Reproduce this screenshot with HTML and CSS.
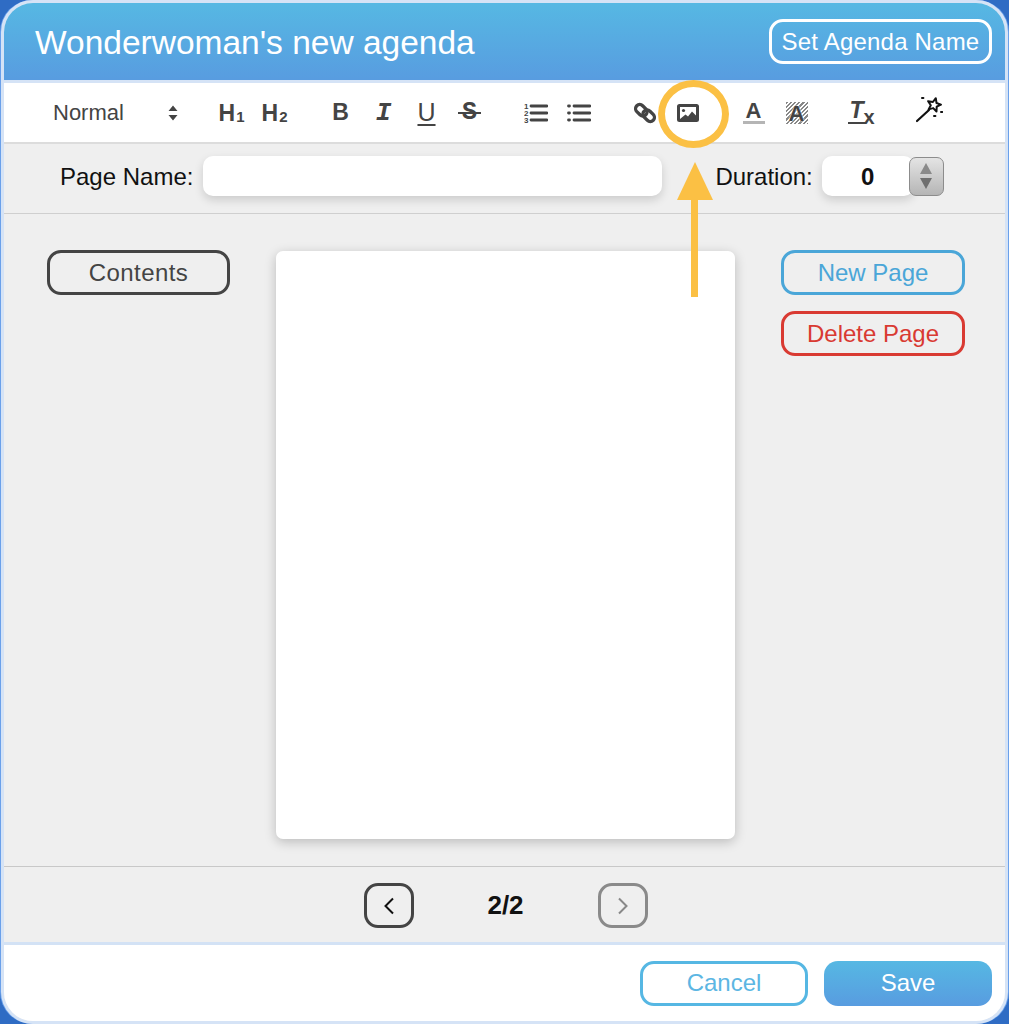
FILE: index.html
```html
<!DOCTYPE html>
<html>
<head>
    <title>Agenda editor</title>
    <link rel="stylesheet" href="styles.css">
</head>
<body>
    <div class="window">
        <div class="header">
            <div class="title">Wonderwoman's new agenda</div>
            <button class="btn btn-white">Set Agenda Name</button>
        </div>

        <div class="toolbar">
            <div class="picker">
                <span>Normal</span>
                <svg width="10" height="16" viewBox="0 0 10 16"><path d="M5 0.5 L9.5 6 H0.5 Z M5 15.5 L9.5 10 H0.5 Z" fill="#444"/></svg>
            </div>
            <div class="tool-group">
                <span class="tool tool-h">H<small>1</small></span>
                <span class="tool tool-h">H<small>2</small></span>
            </div>
            <div class="tool-group">
                <span class="tool tool-b">B</span>
                <span class="tool tool-i">I</span>
                <span class="tool tool-u">U</span>
                <span class="tool tool-s">S</span>
            </div>
            <div class="tool-group">
                <span class="tool">
                    <svg width="24" height="22" viewBox="0 0 24 22">
                        <text x="0" y="7" class="list-num">1</text>
                        <text x="0" y="14" class="list-num">2</text>
                        <text x="0" y="21" class="list-num">3</text>
                        <path d="M7 4 H23 M7 11 H23 M7 18 H23" stroke="#444" stroke-width="2.8" stroke-linecap="round"/>
                    </svg>
                </span>
                <span class="tool">
                    <svg width="24" height="22" viewBox="0 0 24 22">
                        <path d="M1.5 4 H2.5 M1.5 11 H2.5 M1.5 18 H2.5" stroke="#444" stroke-width="2.8" stroke-linecap="round"/>
                        <path d="M7 4 H23 M7 11 H23 M7 18 H23" stroke="#444" stroke-width="2.8" stroke-linecap="round"/>
                    </svg>
                </span>
            </div>
            <div class="tool-group">
                <span class="tool">
                    <svg width="22" height="22" viewBox="0 0 24 24" fill="none" stroke="#444" stroke-width="3.6">
                        <rect x="1" y="4.5" width="14" height="9" rx="4.5" transform="rotate(45 8 9)"/>
                        <rect x="9" y="10.5" width="14" height="9" rx="4.5" transform="rotate(45 16 15)"/>
                    </svg>
                </span>
                <span class="tool">
                    <svg width="22" height="18" viewBox="0 0 22 18">
                        <rect x="1.5" y="1.5" width="19" height="15" rx="1" fill="none" stroke="#444" stroke-width="3"/>
                        <circle cx="6.5" cy="6.5" r="1.6" fill="#444"/>
                        <path d="M3 15 L8.5 10.5 L11 12.5 L15 7.5 L19.5 12 V15 Z" fill="#444"/>
                    </svg>
                </span>
            </div>
            <div class="tool-group">
                <span class="tool"><span class="tool-color">A</span></span>
                <span class="tool"><span class="tool-bg">A</span></span>
            </div>
            <div class="tool-group">
                <span class="tool tool-clear"><span class="clear-t">T</span><span class="clear-x">x</span></span>
            </div>
            <div class="tool-group">
                <span class="tool tool-wand">
                    <svg width="28" height="28" viewBox="0 0 28 28" fill="none">
                        <path d="M2 25 L14 14" stroke="#111" stroke-width="2.2" stroke-linecap="round"/>
                        <path d="M20.8 2.2 L21.5 7 L26 8.6 L21.7 10.7 L21.5 15.5 L18.2 12.1 L13.6 13.4 L15.8 9.2 L13.1 5.2 L17.9 6 Z" fill="white" stroke="#111" stroke-width="2" stroke-linejoin="round"/>
                        <path d="M7 2 h1.4 M21 -1 h1.4 M26 16 h1.4 M19 20 h1.4" stroke="#111" stroke-width="2" stroke-linecap="round"/>
                    </svg>
                </span>
            </div>
        </div>

        <div class="form-row">
            <label class="form-label">Page Name:</label>
            <div class="input input-name"></div>
            <label class="form-label label-duration">Duration:</label>
            <div class="duration">
                <div class="input input-duration">0</div>
                <div class="stepper">
                    <svg width="14" height="28" viewBox="0 0 14 28"><path d="M7 1 L13 12 H1 Z" fill="#8a8a8a"/><path d="M7 27 L13 16 H1 Z" fill="#6f6f6f"/></svg>
                </div>
            </div>
        </div>

        <div class="main">
            <div class="side-left">
                <button class="btn btn-dark btn-side btn-contents">Contents</button>
            </div>
            <div class="page"></div>
            <div class="side-right">
                <button class="btn btn-blue btn-side">New Page</button>
                <button class="btn btn-red btn-side">Delete Page</button>
            </div>
        </div>

        <div class="pager">
            <button class="btn btn-dark btn-nav">
                <svg width="12" height="18" viewBox="0 0 12 18"><path d="M10 1.5 L2.5 9 L10 16.5" fill="none" stroke="#111" stroke-width="2"/></svg>
            </button>
            <span class="page-count">2/2</span>
            <button class="btn btn-gray btn-nav">
                <svg width="12" height="18" viewBox="0 0 12 18"><path d="M2 1.5 L9.5 9 L2 16.5" fill="none" stroke="#888" stroke-width="2"/></svg>
            </button>
        </div>

        <div class="footer">
            <button class="btn btn-cancel">Cancel</button>
            <button class="btn btn-save">Save</button>
        </div>

        <!-- yellow callout over the image button -->
        <div class="callout-ring"></div>
        <svg class="callout-arrow" width="38" height="135" viewBox="0 0 38 135">
            <path d="M19 0 L37 38 H1 Z" fill="#fbc044"/>
            <rect x="15" y="37" width="7" height="98" fill="#fbc044"/>
        </svg>
    </div>
</body>
</html>
```

FILE: styles.css
```css
html, body { margin: 0; padding: 0; }
body { background: #2f6cc4; font-family: "Liberation Sans", Arial, sans-serif; }

.window {
    position: relative;
    width: 1007px;
    height: 1024px;
    margin-left: 1px;
    box-sizing: border-box;
    border: 3px solid #d5e3f6;
    border-radius: 32px;
    box-shadow: -1px 0 0 #6aa0ea, 1px 0 0 #6aa0ea;
    overflow: hidden;
    display: flex;
    flex-direction: column;
    background: #efefef;
}

.btn {
    box-sizing: border-box;
    height: 45px;
    border: 3px solid #444;
    border-radius: 14px;
    background: transparent;
    font-family: inherit;
    font-size: 24px;
    padding: 0;
    display: flex;
    align-items: center;
    justify-content: center;
}

/* header */
.header {
    height: 77px;
    flex: none;
    box-sizing: border-box;
    padding: 0 13px 0 31px;
    display: flex;
    align-items: center;
    justify-content: space-between;
    background: linear-gradient(#56b8e3, #589ce0);
}
.title { color: white; font-size: 33.5px; margin-top: 2px; }
.btn-white { width: 223px; border-color: white; color: white; letter-spacing: 0.2px; }

/* toolbar */
.toolbar {
    height: 59px;
    flex: none;
    margin-top: 3px;
    border-bottom: 2px solid #dcdcdc;
    background: white;
    color: #444;
    display: flex;
    align-items: center;
    padding-left: 49px;
    box-shadow: 0 -3px 0 #d5e3f6;
}
.picker {
    width: 125px;
    display: flex;
    justify-content: space-between;
    align-items: center;
    font-size: 22px;
    padding-right: 10px;
    margin-right: 22px;
}
.tool-group { display: flex; margin-right: 23px; }
.tool {
    width: 43px;
    height: 30px;
    display: flex;
    align-items: center;
    justify-content: center;
    font-size: 23px;
    font-weight: bold;
}
.tool-h { padding-top: 2px; box-sizing: border-box; }
.tool-h small { font-size: 15px; position: relative; top: 3px; margin-left: 1px; }
.tool-i { font-family: "Liberation Mono", monospace; font-style: italic; font-size: 26px; }
.tool-u {
    font-weight: normal;
    font-size: 25px;
    text-decoration: underline;
    text-decoration-thickness: 2px;
    text-underline-offset: 3px;
}
.tool-s { position: relative; font-family: "Liberation Mono", monospace; font-size: 25px; }
.tool-s::after {
    content: "";
    position: absolute;
    left: 10px;
    right: 10px;
    top: 14px;
    height: 2px;
    background: #444;
}
.list-num { font-size: 8px; font-weight: bold; fill: #444; font-family: "Liberation Sans", sans-serif; }
.tool-color {
    display: block;
    width: 22px;
    text-align: center;
    font-size: 22px;
    line-height: 20px;
    border-bottom: 3px solid #b5b5b5;
}
.tool-bg {
    display: block;
    width: 22px;
    height: 22px;
    text-align: center;
    font-size: 22px;
    line-height: 24px;
    text-shadow: 0 0 1px white, 0 0 2px white;
    background: repeating-linear-gradient(135deg, #888 0 1.5px, white 1.5px 3px);
}
.tool-clear { align-items: flex-start; }
.clear-t {
    font-style: italic;
    font-size: 23px;
    line-height: 24px;
    border-bottom: 2px solid #444;
    padding: 0 3px 0 1px;
    margin-left: -2px;
}
.clear-x { font-size: 20px; line-height: 18px; margin-top: 10px; margin-left: -3px; }
.tool-wand { margin-top: -6px; }

/* page name row */
.form-row {
    height: 70px;
    flex: none;
    box-sizing: border-box;
    border-bottom: 1px solid #cfcfcf;
    display: flex;
    align-items: center;
    padding-left: 56px;
    padding-bottom: 5px;
    font-size: 24px;
    color: #111;
}
.form-label { margin-right: 10px; margin-top: 2px; }
.input {
    height: 40px;
    background: white;
    border-radius: 10px;
    box-shadow: 0 4px 10px rgba(0,0,0,0.15);
}
.input-name { width: 459px; margin-right: 53px; }
.label-duration { margin-right: 9px; }
.duration { display: flex; align-items: center; }
.input-duration {
    width: 92px;
    margin-right: -5px;
    padding-top: 2px;
    box-sizing: border-box;
    font-weight: bold;
    display: flex;
    align-items: center;
    justify-content: center;
}
.stepper {
    position: relative;
    box-sizing: border-box;
    width: 35px;
    height: 39px;
    border: 1px solid #8c8c8c;
    border-radius: 7px;
    background: linear-gradient(#e4e4e4, #b5b5b5);
    display: flex;
    align-items: center;
    justify-content: center;
}

/* page area */
.main {
    flex: 1;
    display: flex;
    border-bottom: 1px solid #c8c8c8;
    padding-top: 36px;
}
.side-left { padding-left: 43px; width: 183px; margin-right: 46px; }
.btn-side { width: 184px; }
.btn-contents { width: 183px; letter-spacing: 0.4px; }
.page {
    width: 459px;
    height: 588px;
    margin-top: 1px;
    background: white;
    border-radius: 7px;
    box-shadow: 0 3px 12px rgba(0,0,0,0.22);
    margin-right: 46px;
}
.side-right { display: flex; flex-direction: column; gap: 16px; }
.btn-dark { color: #444; }
.btn-blue { border-color: #4aa6d8; color: #4aa6d8; }
.btn-red { border-color: #d93a32; color: #d93a32; }

/* pager */
.pager {
    height: 75px;
    flex: none;
    box-sizing: border-box;
    display: flex;
    align-items: center;
    justify-content: center;
    padding: 2px 0 0 2px;
}
.btn-nav { width: 50px; }
.btn-gray { border-color: #8a8a8a; }
.page-count { width: 184px; text-align: center; font-weight: bold; font-size: 26px; color: #111; }

/* footer */
.footer {
    flex: none;
    height: 76px;
    border-top: 3px solid #d3e2f5;
    background: white;
    display: flex;
    align-items: center;
    justify-content: flex-end;
    gap: 16px;
    padding-right: 13px;
}
.btn-cancel { width: 168px; border-color: #56b7e3; color: #5cb6e3; }
.btn-save { width: 168px; border: 0; color: white; background: linear-gradient(#56b8e3, #589ce0); }

/* callout */
.callout-ring {
    position: absolute;
    left: 654px;
    top: 77px;
    width: 71px;
    height: 68px;
    box-sizing: border-box;
    border: 7px solid #fbc044;
    border-radius: 50%;
}
.callout-arrow { position: absolute; left: 672px; top: 159px; }
```
